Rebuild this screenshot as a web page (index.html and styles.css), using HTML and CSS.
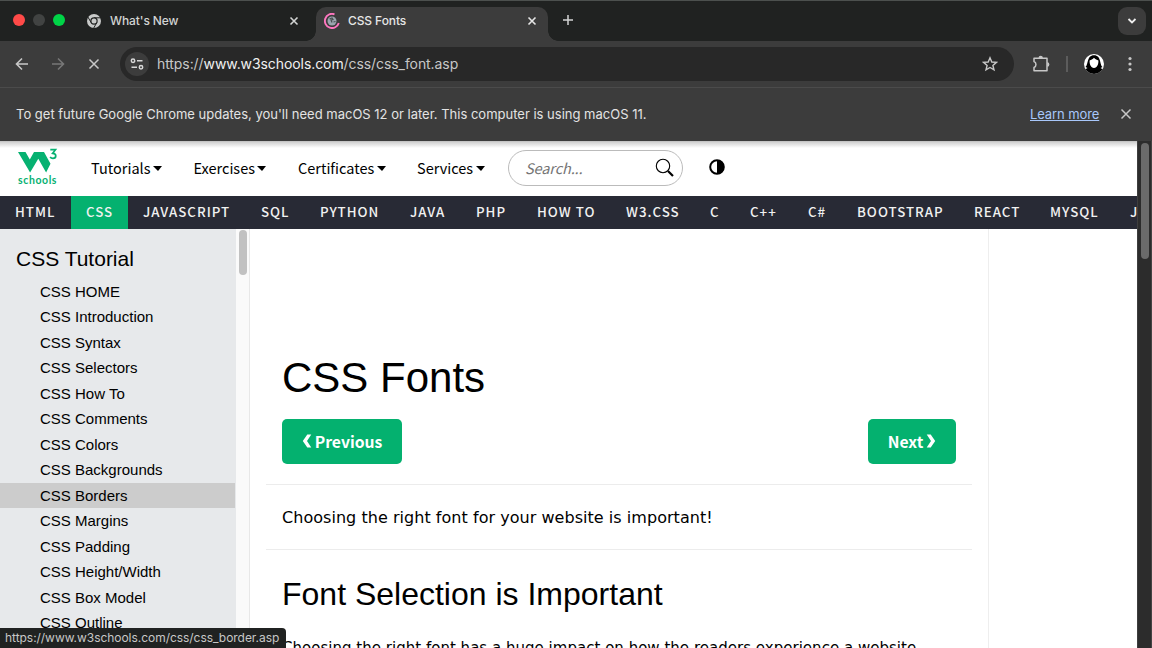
FILE: index.html
```html
<!DOCTYPE html>
<html lang="en">
<head>
<meta charset="utf-8">
<title>CSS Fonts</title>
<link rel="stylesheet" href="styles.css">
</head>
<body>
<div class="window">
  <div class="tabstrip">
    <div class="lights"><i class="light red"></i><i class="light gray"></i><i class="light green"></i></div>
    <div class="tab">
      <svg class="favicon" width="16" height="16" viewBox="0 0 16 16"><circle cx="8" cy="8" r="7" fill="#c8cac9"/><circle cx="8" cy="8" r="3.700" fill="#202221"/><path d="M8 4.800h7M5.200 9.600 1.700 3.700M10.800 9.600 7.400 15.600" stroke="#202221" stroke-width="1"/><circle cx="8" cy="8" r="2.500" fill="#c8cac9"/></svg>
      <span class="tab-title">What's New</span>
      <svg class="tab-close" width="10" height="10" viewBox="0 0 10 10"><path d="m1.5 1.5 7 7m0-7-7 7" stroke="#d2d4d3" stroke-width="1.6"/></svg>
    </div>
    <div class="tab active">
      <svg class="favicon" width="16" height="16" viewBox="0 0 16 16"><circle cx="8" cy="8" r="4.5" fill="#9aa5ae"/><path d="M5.500 6 8 5l1 1.500-2 .5 1 2.500M9.500 9l2-.5" fill="none" stroke="#4a4d50" stroke-width="1.2"/><path d="M10.500 1.300A7.100 7.100 0 1 0 14.800 10" fill="none" stroke="#ff77c0" stroke-width="1.900"/></svg>
      <span class="tab-title">CSS Fonts</span>
      <svg class="tab-close" width="10" height="10" viewBox="0 0 10 10"><path d="m1.5 1.5 7 7m0-7-7 7" stroke="#e6e6e6" stroke-width="1.6"/></svg>
    </div>
    <svg class="new-tab" width="12" height="12" viewBox="0 0 12 12"><path d="M6 1v10M1 6h10" stroke="#d2d4d3" stroke-width="1.5"/></svg>
    <div class="tab-search"><svg width="10" height="8" viewBox="0 0 10 8"><path d="m1.5 2 3.5 3.5L8.500 2" fill="none" stroke="#eee" stroke-width="1.8"/></svg></div>
  </div>
  <div class="toolbar">
    <svg class="tool back" width="14" height="14" viewBox="0 0 14 14"><path d="M13 7H2M7 1.500 1.500 7 7 12.500" fill="none" stroke="#c7c7c7" stroke-width="1.6"/></svg>
    <svg class="tool fwd" width="14" height="14" viewBox="0 0 14 14"><path d="M1 7h11M7 1.500 12.500 7 7 12.500" fill="none" stroke="#777" stroke-width="1.6"/></svg>
    <svg class="tool stop" width="12" height="12" viewBox="0 0 12 12"><path d="m1.500 1.500 9 9m0-9-9 9" stroke="#c7c7c7" stroke-width="1.5"/></svg>
    <div class="omnibox">
      <span class="site-info"><svg width="14" height="12" viewBox="0 0 14 12" fill="none" stroke="#d8d8d8" stroke-width="1.5"><circle cx="3" cy="2.700" r="1.700"/><path d="M7 2.700h5.500M1.500 9.300H7"/><circle cx="11" cy="9.300" r="1.700"/></svg></span>
      <span class="url">https://<b>www.w3schools.com</b>/css/css_font.asp</span>
      <svg class="star" width="16" height="16" viewBox="0 0 16 16"><path d="m8 1.800 1.800 4.200 4.600.4-3.500 3 1.100 4.500L8 11.500l-4 2.400 1.100-4.500-3.500-3 4.600-.4z" fill="none" stroke="#c7c7c7" stroke-width="1.400"/></svg>
    </div>
    <svg class="puzzle" width="18" height="18" viewBox="0 0 18 18"><path d="M2 3.200h13v12.600H2v-3.300c2.600-1 2.600-5 0-6z" fill="none" stroke="#c7c7c7" stroke-width="1.500" stroke-linejoin="round"/><path d="M6.500 3a2.200 2.200 0 0 1 4.400 0zM15.200 7.300a2.200 2.200 0 0 1 0 4.400z" fill="#c7c7c7"/></svg>
    <i class="divider"></i>
    <svg class="avatar" width="20" height="20" viewBox="0 0 20 20"><defs><clipPath id="face"><circle cx="10" cy="10" r="10"/></clipPath></defs><g clip-path="url(#face)"><path fill="#fff" d="M0 0h20v20H0z"/><path d="M1.500 13C4.500 11 2.500 1.200 10 1.200s5.500 9.800 8.500 11.800l-2 1 3.500 2v4H0v-4l3.500-2z"/><path d="M5.600 6.500C7 6 8.800 5.300 10 3.800c1.200 1.500 3 2.200 4.400 2.700.2 4-1.200 7-4.400 7.500-3.200-.5-4.600-3.500-4.400-7.500" fill="#fff"/></g></svg>
    <svg class="menu" width="4" height="16" viewBox="0 0 4 16" fill="#c7c7c7"><circle cx="2" cy="2.500" r="1.600"/><circle cx="2" cy="8" r="1.600"/><circle cx="2" cy="13.500" r="1.600"/></svg>
  </div>
  <div class="infobar">
    <span class="notice">To get future Google Chrome updates, you'll need macOS 12 or later. This computer is using macOS 11.</span>
    <span class="learn">Learn more</span>
    <svg class="dismiss" width="12" height="12" viewBox="0 0 12 12"><path d="m1.500 1.500 9 9m0-9-9 9" stroke="#c7c7c7" stroke-width="1.5"/></svg>
  </div>
  <div class="viewport">
    <div class="page">
      <div class="topnav">
        <div class="logo">
          <svg width="40" height="26" viewBox="0 0 40 26"><path d="M0 4h7.500l4.300 7.500L16 4h10l6.500 11.800-4.400 8.700-7.800-13.700-8.200 13.700z" fill="#06b171"/><path d="M32.300 1.700h5.200l-2.800 3.600c4.200.2 3.900 5 .2 5-1.300 0-2.200-.5-2.800-1.300" fill="none" stroke="#06b171" stroke-width="1.700"/></svg>
          <span>schools</span>
        </div>
        <div class="nav-item tutorials">Tutorials<i class="caret"></i></div>
        <div class="nav-item exercises">Exercises<i class="caret"></i></div>
        <div class="nav-item certificates">Certificates<i class="caret"></i></div>
        <div class="nav-item services">Services<i class="caret"></i></div>
        <div class="search"><span>Search...</span><svg width="20" height="20" viewBox="0 0 20 20" fill="none" stroke="#000"><circle cx="8" cy="8" r="6.700" stroke-width="1.100"/><path d="m13 13 5 5" stroke-width="2.200"/></svg></div>
        <svg class="contrast" width="16" height="16" viewBox="0 0 16 16"><circle cx="8" cy="8" r="6.800" fill="#fff" stroke="#000" stroke-width="2"/><path d="M8 1v14A7 7 0 0 0 8 1"/></svg>
      </div>
      <div class="subnav">
        <span class="w71">HTML</span><span class="w57 current">CSS</span><span class="w118">JAVASCRIPT</span><span class="w59">SQL</span><span class="w90">PYTHON</span><span class="w66">JAVA</span><span class="w61">PHP</span><span class="w89">HOW TO</span><span class="w84">W3.CSS</span><span class="w40">C</span><span class="w58">C++</span><span class="w49">C#</span><span class="w117">BOOTSTRAP</span><span class="w76">REACT</span><span class="w80">MYSQL</span><span class="w71">JQUERY</span>
      </div>
      <div class="body">
        <div class="sidebar">
          <div class="side-title">CSS Tutorial</div>
          <div class="side-link">CSS HOME</div>
          <div class="side-link">CSS Introduction</div>
          <div class="side-link">CSS Syntax</div>
          <div class="side-link">CSS Selectors</div>
          <div class="side-link">CSS How To</div>
          <div class="side-link">CSS Comments</div>
          <div class="side-link">CSS Colors</div>
          <div class="side-link">CSS Backgrounds</div>
          <div class="side-link hovered">CSS Borders</div>
          <div class="side-link">CSS Margins</div>
          <div class="side-link">CSS Padding</div>
          <div class="side-link">CSS Height/Width</div>
          <div class="side-link">CSS Box Model</div>
          <div class="side-link">CSS Outline</div>
        </div>
        <div class="side-scroll"><i></i></div>
        <div class="content">
          <h1>CSS Fonts</h1>
          <div class="pager">
            <span class="btn prev"><svg width="10" height="14" viewBox="0 0 10 14"><path d="M5.300.500H9.300L5 7l4.300 6.500h-4L.800 7z" fill="#fff"/></svg>Previous</span>
            <span class="btn next">Next<svg width="10" height="14" viewBox="0 0 10 14"><path d="M4.700.500H.700L5 7 .700 13.500h4L9.200 7z" fill="#fff"/></svg></span>
          </div>
          <div class="intro">Choosing the right font for your website is important!</div>
          <h2>Font Selection is Important</h2>
          <p>Choosing the right font has a huge impact on how the readers experience a website.</p>
        </div>
      </div>
    </div>
    <div class="page-scroll"><i></i></div>
  </div>
  <div class="status">https://www.w3schools.com/css/css_border.asp</div>
</div>
</body>
</html>
```
FILE: styles.css
```css
* { box-sizing: border-box; }
body { margin: 0; width: 1152px; height: 648px; overflow: hidden; font-family: Inter, sans-serif; }
svg { display: block; flex: none; }
.window { position: relative; display: flex; flex-direction: column; height: 648px; overflow: hidden; background: #3c3c3c; }

.tabstrip { display: flex; align-items: center; height: 41px; flex: none; border-top: 1px solid #4c504e; background: #202221; color: #d2d4d3; }
.lights { display: flex; gap: 8px; width: 86px; padding-left: 13px; flex: none; margin-top: -2px; }
.light { width: 12px; height: 12px; border-radius: 50%; }
.red { background: #ff4a48; }
.gray { background: #414342; }
.green { background: #00d447; }
.tab { display: flex; align-items: center; width: 230px; flex: none; height: 34px; font-size: 12px; font-weight: 500; }
.tab-title { flex: 1; margin-left: 8px; padding-bottom: 2px; white-space: nowrap; letter-spacing: -.1px; }
.tab-close { margin-right: 17px; }
.active { width: 232px; align-self: flex-end; padding: 0 0 6px 8px; background: #3c3c3c; color: #e6e6e6; border-radius: 10px 10px 0 0; position: relative; }
.active .tab-close { margin-right: 11px; }
.active::before, .active::after { content: ""; position: absolute; bottom: 0; width: 10px; height: 10px; }
.active::before { left: -10px; background: radial-gradient(circle at 0 0, transparent 9.5px, #3c3c3c 10px); }
.active::after { right: -10px; background: radial-gradient(circle at 100% 0, transparent 9.5px, #3c3c3c 10px); }
.new-tab { margin-left: 14px; margin-top: -2px; }
.tab-search { display: flex; align-items: center; justify-content: center; width: 28px; height: 28px; margin-left: auto; margin-right: 6px; border-radius: 9px; background: #3c3c3c; }

.toolbar { display: flex; align-items: center; height: 47px; flex: none; border-bottom: 1px solid #4b4b4b; padding-left: 15px; }
.fwd { margin-left: 22px; }
.stop { margin-left: 23px; }
.omnibox { display: flex; align-items: center; width: 894px; height: 34px; margin-left: 20px; padding-left: 5px; border-radius: 17px; background: #282828; flex: none; }
.site-info { display: flex; align-items: center; justify-content: center; width: 24px; height: 24px; border-radius: 50%; background: #3c3c3c; }
.url { flex: 1; margin-left: 8px; padding-bottom: 1px; font-size: 14px; color: #c7c7c7; letter-spacing: -.08px; }
.url b { font-weight: 400; color: #f0f0f0; }
.star { margin-right: 16px; }
.puzzle { margin-left: 18px; }
.divider { width: 2px; height: 16px; margin-left: 16px; background: #5c5c5c; }
.avatar { margin-left: 16px; }
.menu { margin-left: 24px; }

.infobar { display: flex; align-items: center; height: 53px; flex: none; padding-left: 16px; font-size: 13px; color: #e3e3e3; }
.notice { width: 1014px; padding-bottom: 1px; white-space: nowrap; }
.learn { width: 69px; padding-bottom: 1px; white-space: nowrap; letter-spacing: -.1px; color: #a8c7fa; text-decoration: underline; }
.dismiss { margin: -1px 0 0 21px; }

.viewport { display: flex; flex: 1; min-height: 0; }
.page { width: 1137px; flex: none; overflow: hidden; background: #fff; }
.topnav { display: flex; align-items: center; height: 55px; padding-left: 18px; background: linear-gradient(#bbb, #d0d0d0 1px, #fff 7px); font-family: "Noto Sans CJK SC", sans-serif; font-size: 14.500px; color: #000; }
.logo { width: 73px; flex: none; height: 41px; font: 700 10.500px/13px Lato, sans-serif; color: #06b171; letter-spacing: .6px; }
.logo span { display: block; }
.nav-item { display: flex; align-items: center; flex: none; padding-bottom: 2px; white-space: nowrap; }
.tutorials { width: 102.500px; }
.exercises { width: 104.500px; }
.certificates { width: 119px; }
.services { width: 91px; }
.caret { margin: 2px 0 0 2.500px; border: 4.500px solid transparent; border-left-width: 5px; border-top: 5px solid #000; border-bottom: 0; }
.search { display: flex; align-items: center; justify-content: space-between; width: 175px; height: 36px; flex: none; margin-top: -2px; padding: 0 7px 0 16px; border: 1px solid #bbb; border-radius: 18px; color: #757575; font-style: italic; }
.search span { padding-bottom: 1px; letter-spacing: -.1px; }
.contrast { margin-left: 26px; margin-top: -3px; }
.subnav { display: flex; height: 33px; background: #282a35; color: #f1f1f1; font: 500 13.300px/31px "Noto Sans CJK SC", sans-serif; letter-spacing: 1px; white-space: nowrap; }
.subnav span { flex: none; padding-left: 15px; }
.current { background: #04b16f; }
.w71 { width: 71px; } .w57 { width: 57px; } .w118 { width: 118px; } .w59 { width: 59px; }
.w90 { width: 90px; } .w66 { width: 66px; } .w61 { width: 61px; } .w89 { width: 89px; }
.w84 { width: 84px; } .w40 { width: 40px; } .w58 { width: 58px; } .w49 { width: 49px; }
.w117 { width: 117px; } .w76 { width: 76px; } .w80 { width: 80px; }

.body { display: flex; height: 419px; overflow: hidden; font-family: "Liberation Sans", Arial, sans-serif; color: #000; }
.sidebar { width: 236px; flex: none; background: #e7e9eb; }
.side-title { height: 49.700px; padding: 14px 0 0 16px; font-size: 21px; line-height: 32px; }
.side-link { height: 25.500px; width: 235px; padding-left: 40px; font-size: 15px; line-height: 25px; }
.hovered { background: #ccc; }
.side-scroll { width: 14px; flex: none; padding: 1px 3px; background: #fafafa; border-right: 1px solid #e8e8e8; }
.side-scroll i { display: block; width: 8px; height: 45px; border-radius: 4px; background: #c1c1c1; }
.content { width: 739px; padding: 116px 16px 0; border-right: 1px solid #eee; }
h1 { height: 74px; margin: 0; padding-left: 16px; font-size: 42px; font-weight: 400; line-height: 65px; }
.pager { display: flex; justify-content: space-between; height: 66px; padding: 0 16px; border-bottom: 1px solid #ececec; }
.btn { display: flex; align-items: center; justify-content: center; gap: 3px; height: 45px; padding-bottom: 1px; border-radius: 5px; background: #04b16f; color: #fff; font: 700 15.700px "Noto Sans CJK SC", sans-serif; }
.prev { width: 120px; }
.next { width: 88px; }
.intro { height: 65px; padding-left: 16px; border-bottom: 1px solid #ececec; font: 16px/65px "DejaVu Sans", Verdana, sans-serif; letter-spacing: .04px; white-space: nowrap; }
h2 { height: 76px; margin: 0; padding: 20px 0 0 16px; font-size: 32px; font-weight: 400; line-height: 48px; }
p { margin: 0; padding: 11px 0 0 16px; font: 15px/23px "DejaVu Sans", Verdana, sans-serif; letter-spacing: .02px; white-space: nowrap; }
.page-scroll { width: 15px; background: #2c2c2c; border-left: 1px solid #3e3e3e; border-right: 1px solid #444; padding: 2px 3px; }
.page-scroll i { display: block; width: 8px; height: 116px; border-radius: 4px; background: #6b6b6b; }
.status { position: absolute; left: 0; bottom: 0; width: 286px; height: 20px; padding-left: 5px; border-radius: 0 4px 0 0; background: #202221; color: #c7c7c7; font-size: 12px; line-height: 20px; letter-spacing: -.04px; white-space: nowrap; }
```
